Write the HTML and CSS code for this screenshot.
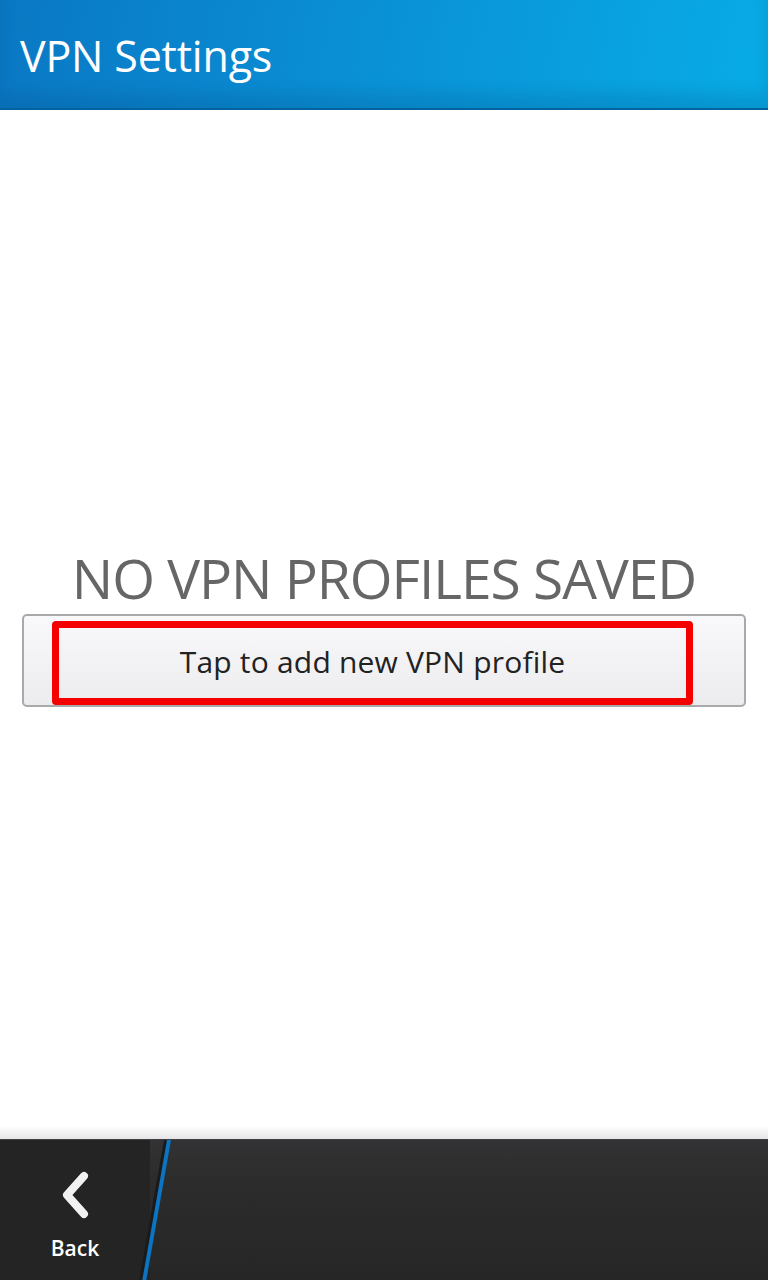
FILE: index.html
```html
<!DOCTYPE html>
<html lang="en">
<head>
  <meta charset="UTF-8">
  <meta name="viewport" content="width=device-width, initial-scale=1.0">
  <title>VPN Settings</title>
  <link rel="stylesheet" href="styles.css">
</head>
<body>
  <div class="screen">
    <div class="title-bar">
      <h1 class="title">VPN Settings</h1>
    </div>

    <div class="content">
      <div class="empty-text">NO VPN PROFILES SAVED</div>
      <div class="add-button">
        <div class="highlight">Tap to add new VPN profile</div>
      </div>
    </div>

    <div class="action-bar">
      <div class="back-action">
        <svg class="back-icon" width="34" height="50" viewBox="0 0 34 50">
          <path d="M26 6 L9 25 L26 44" fill="none" stroke="#f2f2f2" stroke-width="8" stroke-linecap="round" stroke-linejoin="round"/>
        </svg>
        <span class="back-label">Back</span>
      </div>
      <div class="divider"></div>
      <div class="bar-rest"></div>
    </div>
  </div>
</body>
</html>
```

FILE: styles.css
```css
/* General Styling */
body {
  margin: 0;
  padding: 0;
  font-family: "Open Sans", "Noto Sans", sans-serif;
  background-color: #fff;
}

.screen {
  width: 768px;
  height: 1280px;
  display: flex;
  flex-direction: column;
  overflow: hidden;
}

/* Title bar */
.title-bar {
  height: 108px;
  flex-shrink: 0;
  display: flex;
  align-items: center;
  padding-left: 20px;
  background: linear-gradient(100deg, #0a78c4 0%, #0a8fd4 45%, #08ace6 100%);
  border-bottom: 2px solid #0562a0;
  box-shadow: inset 0 -14px 16px rgba(0, 60, 110, 0.18);
}

.title {
  margin: 0;
  margin-top: 2px;
  color: #fff;
  font-size: 43px;
  font-weight: 400;
  letter-spacing: -0.2px;
}

/* Empty state */
.content {
  flex: 1;
  display: flex;
  flex-direction: column;
  align-items: center;
  padding-top: 432px;
  background: linear-gradient(to bottom, #fff 0, #fff 1016px, #e6e4e7 100%);
}

.empty-text {
  color: #666;
  font-size: 55px;
  line-height: 72px;
  letter-spacing: -1px;
}

.add-button {
  box-sizing: border-box;
  width: 724px;
  height: 93px;
  padding: 5px 0 3px 28px;
  border: 2px solid #a9a9ab;
  border-radius: 5px;
  background: linear-gradient(to bottom, #f9f8fa 0%, #ecebee 100%);
  display: flex;
}

.highlight {
  box-sizing: border-box;
  width: 641px;
  height: 84px;
  border: 7px solid #f40000;
  border-radius: 4px;
  display: flex;
  justify-content: center;
  align-items: center;
  color: #222;
  font-size: 30px;
  letter-spacing: 0.2px;
  padding-bottom: 4px;
}

/* Bottom action bar */
.action-bar {
  height: 140px;
  flex-shrink: 0;
  display: flex;
  background: linear-gradient(to bottom, #333234 0%, #2c2c2c 30%, #262626 100%);
  border-top: 1px solid #404040;
}

.back-action {
  width: 150px;
  display: flex;
  flex-direction: column;
  align-items: center;
  background-color: #242424;
}

.back-icon {
  margin-top: 30px;
}

.back-label {
  margin-top: 14px;
  color: #fff;
  font-size: 21px;
  font-weight: 600;
}

.divider {
  width: 4px;
  background-color: #0c74c2;
  transform: skewX(-10deg);
  transform-origin: top left;
  margin-left: 17px;
  box-shadow: -3px 0 0 #1a1a1a;
}

.bar-rest {
  flex: 1;
}
```
